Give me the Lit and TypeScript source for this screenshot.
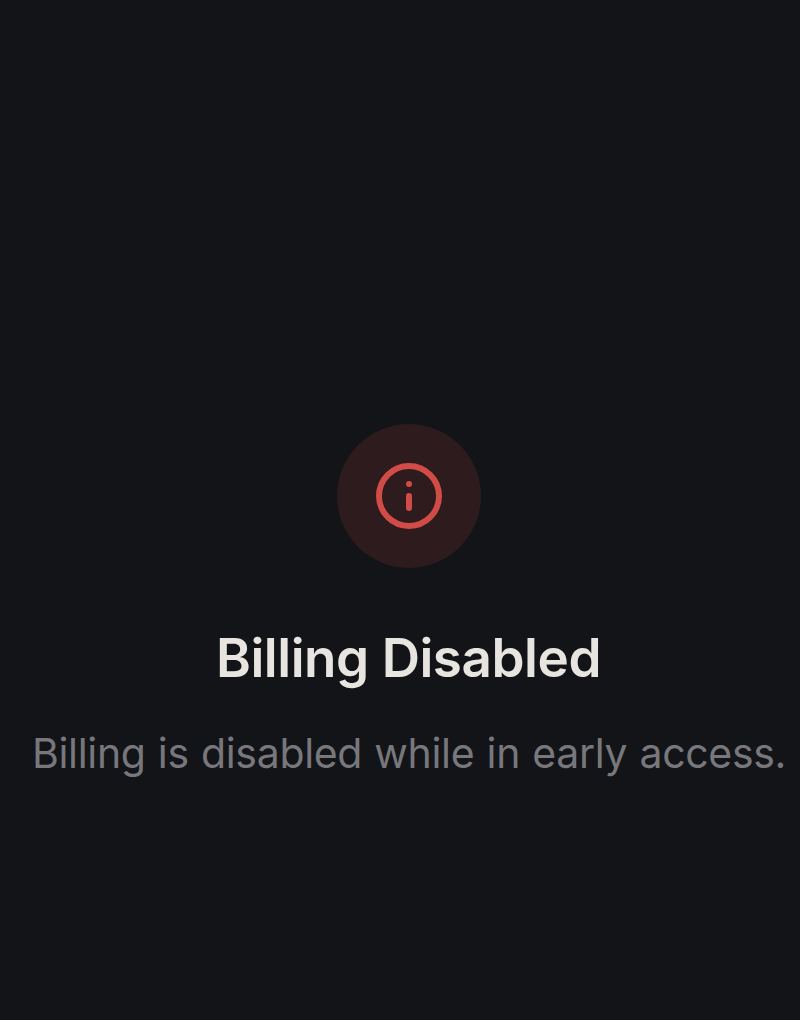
import { LitElement, html, css } from "lit";
import { customElement } from "lit/decorators.js";

@customElement("app-root")
export class AppRoot extends LitElement {
  static styles = css`
    :host {
      display: flex;
      flex-direction: column;
      align-items: center;
      box-sizing: border-box;
      width: 800px;
      height: 1020px;
      padding: 424px 0 0 18px;
      overflow: hidden;
      background: #121418;
      font-family: Inter, "Liberation Sans", sans-serif;
    }
    .badge {
      display: flex;
      align-items: center;
      justify-content: center;
      width: 144px;
      height: 144px;
      border-radius: 50%;
      background: #2e1b1d;
    }
    .icon {
      display: block;
      width: 72px;
      height: 72px;
    }
    .title {
      margin: 57px 1px 0 0;
      font-size: 53px;
      line-height: 66px;
      font-weight: 600;
      letter-spacing: -0.46px;
      white-space: nowrap;
      color: #e8e4df;
    }
    .text {
      margin: 35px 0 0;
      font-size: 41px;
      line-height: 54px;
      letter-spacing: -0.32px;
      word-spacing: 1px;
      white-space: nowrap;
      color: #77777c;
    }
  `;

  render() {
    return html`
      <div class="badge">
        <svg class="icon" viewBox="0 0 72 72" fill="none" stroke="#d24c47" stroke-linecap="round">
          <circle cx="36" cy="36" r="30" stroke-width="6" />
          <path d="M36 36V48" stroke-width="6" />
          <circle cx="36" cy="24" r="3" fill="#d24c47" stroke="none" />
        </svg>
      </div>
      <h1 class="title">Billing Disabled</h1>
      <p class="text">Billing is disabled while in early access.</p>
    `;
  }
}
